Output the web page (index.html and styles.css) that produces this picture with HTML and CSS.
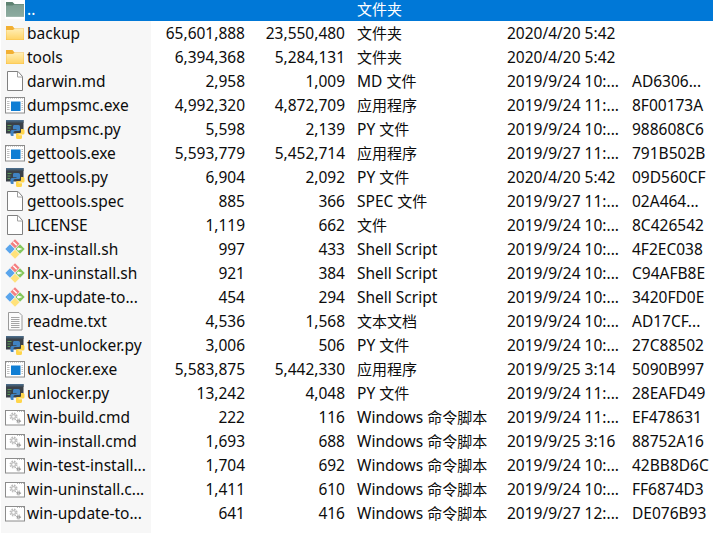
FILE: index.html
```html
<!DOCTYPE html>
<html lang="zh-CN">
<head>
<meta charset="utf-8">
<title>文件列表</title>
<link rel="stylesheet" href="styles.css">
</head>
<body>
<svg class="defs" width="0" height="0" aria-hidden="true">
  <defs>
    <linearGradient id="fg" x1="0" y1="0" x2="0" y2="1"><stop offset="0" stop-color="#ffeeb5"/><stop offset="1" stop-color="#ffd466"/></linearGradient>
    <linearGradient id="ug" x1="0" y1="0" x2="0" y2="1"><stop offset="0" stop-color="#7f9f93"/><stop offset="1" stop-color="#8cab9f"/></linearGradient>
    <linearGradient id="pt" x1="0" y1="0" x2="0" y2="1"><stop offset="0" stop-color="#4e7394"/><stop offset="1" stop-color="#3a4650"/></linearGradient>
    <symbol id="folder" viewBox="0 0 20 20">
      <path d="M1 3h6.500l2 2.500H19V17H1z" fill="#f2b033"/>
      <path d="M1.300 7h6.500l2-1.300h8.900v11H1.300z" fill="url(#fg)"/>
    </symbol>
    <symbol id="updir" viewBox="0 0 20 20">
      <path d="M1 3h6.500l2 2H19v12.500H1z" fill="#5e8271"/>
      <path d="M1 6.500h6.500l2-1H19V17.500H1z" fill="url(#ug)"/>
    </symbol>
    <symbol id="file" viewBox="0 0 20 20">
      <path d="M2.500 .5h10.500l4.500 5v14h-15z" fill="#fff" stroke="#808080"/>
      <path d="M12.500 .5v5.500h5" fill="none" stroke="#a0a0a0"/>
    </symbol>
    <symbol id="text" viewBox="0 0 20 20">
      <path d="M3.500 1.500h10.500l3 3v14.500h-13.500z" fill="#fbfbfb" stroke="#9a9a9a"/>
      <path d="M6 6.500h8.500M6 8.500h8.500M6 10.500h8.500M6 12.500h8.500M6 14.500h8.500M6 16.500h8.500" stroke="#a4a4a4"/>
    </symbol>
    <symbol id="exe" viewBox="0 0 20 20">
      <rect x=".5" y="2.500" width="19" height="15.500" fill="#fff" stroke="#8c8c8c"/>
      <path d="M1 3.500h18" stroke="#cfcfcf" stroke-dasharray="1 1"/>
      <rect x="6" y="6.500" width="9.500" height="9.500" fill="#0f7ed4"/>
      <path d="M2 6.500h2.500M2 8.500h2.500M2 10.500h2.500M2 12.500h2.500M2 14.500h2.500M16.500 6.500h1.500M16.500 8.500h1.500M16.500 10.500h1.500M16.500 12.500h1.500M16.500 14.500h1.500" stroke="#c0c0c0"/>
    </symbol>
    <symbol id="py" viewBox="0 0 20 20">
      <rect x="1" y="1" width="17.500" height="13.500" fill="#3b4148"/>
      <rect x="1" y="1" width="17.500" height="3" fill="url(#pt)"/>
      <path d="M2.500 6.500h4M2.500 9h3M2.500 11.500h2.500" stroke="#5d9a58"/>
      <path d="M9 6h4.500q1.500 0 1.500 1.500V11q0 1-1 1h-4q-1.500 0-1.500 1.500V17H7q-1.500 0-1.500-1.500v-3Q5.500 11 7 11h4.500v-.8H8V7.500Q8 6 9 6z" fill="#3f82c2"/>
      <path d="M16 10h2q1.500 0 1.500 1.500V14q0 1.500-1.500 1.500h-4.500v.7H17v2.300q0 1.500-1.500 1.500h-3q-1.500 0-1.500-1.500V15.500q0-1.500 1.500-1.500H15q1 0 1-1z" fill="#ffd54a"/>
    </symbol>
    <symbol id="git" viewBox="0 0 20 20">
      <path d="M10 .3l4.500 4.500L10 9.300 5.500 4.800z" fill="#f47f80"/>
      <path d="M15 5.300l4.700 4.700-4.700 4.700L10.300 10z" fill="#85c75c"/>
      <path d="M5 5.300L9.700 10 5 14.700.3 10z" fill="#5aa5ec"/>
      <path d="M10 10.700l4.500 4.500L10 19.700l-4.500-4.500z" fill="#ffe27a"/>
      <path d="M8.200 2.700l3.600 3.600" stroke="#fff" stroke-width="1.400"/>
      <path d="M13.500 10h3" stroke="#fff" stroke-width="1.400"/>
      <circle cx="13.500" cy="10" r="1.500" fill="#fff"/>
    </symbol>
    <symbol id="cmd" viewBox="0 0 20 20">
      <rect x=".5" y="3.500" width="19" height="14.500" fill="#fff" stroke="#8c8c8c"/>
      <path d="M12 4.500h7" stroke="#bcbcbc" stroke-dasharray="1 1"/>
      <circle cx="8.500" cy="9.500" r="2.700" fill="#c6c6c6"/>
      <circle cx="8.500" cy="9.500" r="3.400" fill="none" stroke="#b4b4b4" stroke-width="1.200" stroke-dasharray="1.500 1.200"/>
      <circle cx="8.500" cy="9.500" r="1.200" fill="#fff"/>
      <circle cx="13.500" cy="14" r="1.500" fill="#8c8c8c"/>
      <circle cx="13.500" cy="14" r="2.100" fill="none" stroke="#8c8c8c" stroke-width=".9" stroke-dasharray="1 .9"/>
      <circle cx="13.500" cy="14" r=".6" fill="#fff"/>
    </symbol>
  </defs>
</svg>
<main class="list">
  <div class="row selected"><div class="cell name"><svg class="icon"><use href="#updir"/></svg><span class="label">..</span></div><div class="cell num"></div><div class="cell num"></div><div class="cell"><span class="zh">文件夹</span></div><div class="cell"></div><div class="cell"></div></div>
  <div class="row"><div class="cell name"><svg class="icon"><use href="#folder"/></svg><span class="label">backup</span></div><div class="cell num">65,601,888</div><div class="cell num">23,550,480</div><div class="cell"><span class="zh">文件夹</span></div><div class="cell">2020/4/20 5:42</div><div class="cell"></div></div>
  <div class="row"><div class="cell name"><svg class="icon"><use href="#folder"/></svg><span class="label">tools</span></div><div class="cell num">6,394,368</div><div class="cell num">5,284,131</div><div class="cell"><span class="zh">文件夹</span></div><div class="cell">2020/4/20 5:42</div><div class="cell"></div></div>
  <div class="row"><div class="cell name"><svg class="icon"><use href="#file"/></svg><span class="label">darwin.md</span></div><div class="cell num">2,958</div><div class="cell num">1,009</div><div class="cell">MD <span class="zh">文件</span></div><div class="cell">2019/9/24 10:...</div><div class="cell">AD6306...</div></div>
  <div class="row"><div class="cell name"><svg class="icon"><use href="#exe"/></svg><span class="label">dumpsmc.exe</span></div><div class="cell num">4,992,320</div><div class="cell num">4,872,709</div><div class="cell"><span class="zh">应用程序</span></div><div class="cell">2019/9/24 11:...</div><div class="cell">8F00173A</div></div>
  <div class="row"><div class="cell name"><svg class="icon"><use href="#py"/></svg><span class="label">dumpsmc.py</span></div><div class="cell num">5,598</div><div class="cell num">2,139</div><div class="cell">PY <span class="zh">文件</span></div><div class="cell">2019/9/24 10:...</div><div class="cell">988608C6</div></div>
  <div class="row"><div class="cell name"><svg class="icon"><use href="#exe"/></svg><span class="label">gettools.exe</span></div><div class="cell num">5,593,779</div><div class="cell num">5,452,714</div><div class="cell"><span class="zh">应用程序</span></div><div class="cell">2019/9/27 11:...</div><div class="cell">791B502B</div></div>
  <div class="row"><div class="cell name"><svg class="icon"><use href="#py"/></svg><span class="label">gettools.py</span></div><div class="cell num">6,904</div><div class="cell num">2,092</div><div class="cell">PY <span class="zh">文件</span></div><div class="cell">2020/4/20 5:42</div><div class="cell">09D560CF</div></div>
  <div class="row"><div class="cell name"><svg class="icon"><use href="#file"/></svg><span class="label">gettools.spec</span></div><div class="cell num">885</div><div class="cell num">366</div><div class="cell">SPEC <span class="zh">文件</span></div><div class="cell">2019/9/27 11:...</div><div class="cell">02A464...</div></div>
  <div class="row"><div class="cell name"><svg class="icon"><use href="#file"/></svg><span class="label">LICENSE</span></div><div class="cell num">1,119</div><div class="cell num">662</div><div class="cell"><span class="zh">文件</span></div><div class="cell">2019/9/24 10:...</div><div class="cell">8C426542</div></div>
  <div class="row"><div class="cell name"><svg class="icon"><use href="#git"/></svg><span class="label">lnx-install.sh</span></div><div class="cell num">997</div><div class="cell num">433</div><div class="cell">Shell Script</div><div class="cell">2019/9/24 10:...</div><div class="cell">4F2EC038</div></div>
  <div class="row"><div class="cell name"><svg class="icon"><use href="#git"/></svg><span class="label">lnx-uninstall.sh</span></div><div class="cell num">921</div><div class="cell num">384</div><div class="cell">Shell Script</div><div class="cell">2019/9/24 10:...</div><div class="cell">C94AFB8E</div></div>
  <div class="row"><div class="cell name"><svg class="icon"><use href="#git"/></svg><span class="label">lnx-update-to...</span></div><div class="cell num">454</div><div class="cell num">294</div><div class="cell">Shell Script</div><div class="cell">2019/9/24 10:...</div><div class="cell">3420FD0E</div></div>
  <div class="row"><div class="cell name"><svg class="icon"><use href="#text"/></svg><span class="label">readme.txt</span></div><div class="cell num">4,536</div><div class="cell num">1,568</div><div class="cell"><span class="zh">文本文档</span></div><div class="cell">2019/9/24 10:...</div><div class="cell">AD17CF...</div></div>
  <div class="row"><div class="cell name"><svg class="icon"><use href="#py"/></svg><span class="label">test-unlocker.py</span></div><div class="cell num">3,006</div><div class="cell num">506</div><div class="cell">PY <span class="zh">文件</span></div><div class="cell">2019/9/24 10:...</div><div class="cell">27C88502</div></div>
  <div class="row"><div class="cell name"><svg class="icon"><use href="#exe"/></svg><span class="label">unlocker.exe</span></div><div class="cell num">5,583,875</div><div class="cell num">5,442,330</div><div class="cell"><span class="zh">应用程序</span></div><div class="cell">2019/9/25 3:14</div><div class="cell">5090B997</div></div>
  <div class="row"><div class="cell name"><svg class="icon"><use href="#py"/></svg><span class="label">unlocker.py</span></div><div class="cell num">13,242</div><div class="cell num">4,048</div><div class="cell">PY <span class="zh">文件</span></div><div class="cell">2019/9/24 11:...</div><div class="cell">28EAFD49</div></div>
  <div class="row"><div class="cell name"><svg class="icon"><use href="#cmd"/></svg><span class="label">win-build.cmd</span></div><div class="cell num">222</div><div class="cell num">116</div><div class="cell">Windows <span class="zh">命令脚本</span></div><div class="cell">2019/9/24 11:...</div><div class="cell">EF478631</div></div>
  <div class="row"><div class="cell name"><svg class="icon"><use href="#cmd"/></svg><span class="label">win-install.cmd</span></div><div class="cell num">1,693</div><div class="cell num">688</div><div class="cell">Windows <span class="zh">命令脚本</span></div><div class="cell">2019/9/25 3:16</div><div class="cell">88752A16</div></div>
  <div class="row"><div class="cell name"><svg class="icon"><use href="#cmd"/></svg><span class="label">win-test-install...</span></div><div class="cell num">1,704</div><div class="cell num">692</div><div class="cell">Windows <span class="zh">命令脚本</span></div><div class="cell">2019/9/24 10:...</div><div class="cell">42BB8D6C</div></div>
  <div class="row"><div class="cell name"><svg class="icon"><use href="#cmd"/></svg><span class="label">win-uninstall.c...</span></div><div class="cell num">1,411</div><div class="cell num">610</div><div class="cell">Windows <span class="zh">命令脚本</span></div><div class="cell">2019/9/24 10:...</div><div class="cell">FF6874D3</div></div>
  <div class="row"><div class="cell name"><svg class="icon"><use href="#cmd"/></svg><span class="label">win-update-to...</span></div><div class="cell num">641</div><div class="cell num">416</div><div class="cell">Windows <span class="zh">命令脚本</span></div><div class="cell">2019/9/27 12:...</div><div class="cell">DE076B93</div></div>
</main>
</body>
</html>
```

FILE: styles.css
```css
html, body {
  margin: 0;
  padding: 0;
  height: 100%;
  overflow: hidden;
  background: #fff;
}

body {
  font-family: "Noto Sans", "Noto Sans CJK SC", sans-serif;
  font-size: 15.5px;
  color: #0c0c0c;
}

.defs {
  display: block;
  height: 0;
}

.list {
  padding-left: 1px;
  min-height: 533px;
  box-sizing: border-box;
  background-image: linear-gradient(#f7f7f7, #f7f7f7);
  background-size: 150px 100%;
  background-position: 1px 0;
  background-repeat: no-repeat;
}

.row {
  display: grid;
  grid-template-columns: 150px 100px 100px 150px 125px 87px;
  height: 24px;
}

.cell {
  padding: 0 6px;
  line-height: 24px;
  white-space: nowrap;
  overflow: hidden;
  height: 24px;
}

.name {
  display: flex;
  align-items: center;
  gap: 2px;
  padding: 0 0 0 4px;
}

.icon {
  width: 20px;
  height: 20px;
  flex: none;
}

.num {
  text-align: right;
}

.zh {
  font-family: "Noto Sans CJK SC", sans-serif;
  font-size: 15px;
}

.selected {
  height: 21px;
  color: #fff;
  background: linear-gradient(#0078d7, #0078d7) 24px 0 / 688px 100% no-repeat;
}

.selected .cell {
  height: 18px;
  line-height: 18px;
  overflow: visible;
}

.selected .icon {
  background: #fff;
}
```
